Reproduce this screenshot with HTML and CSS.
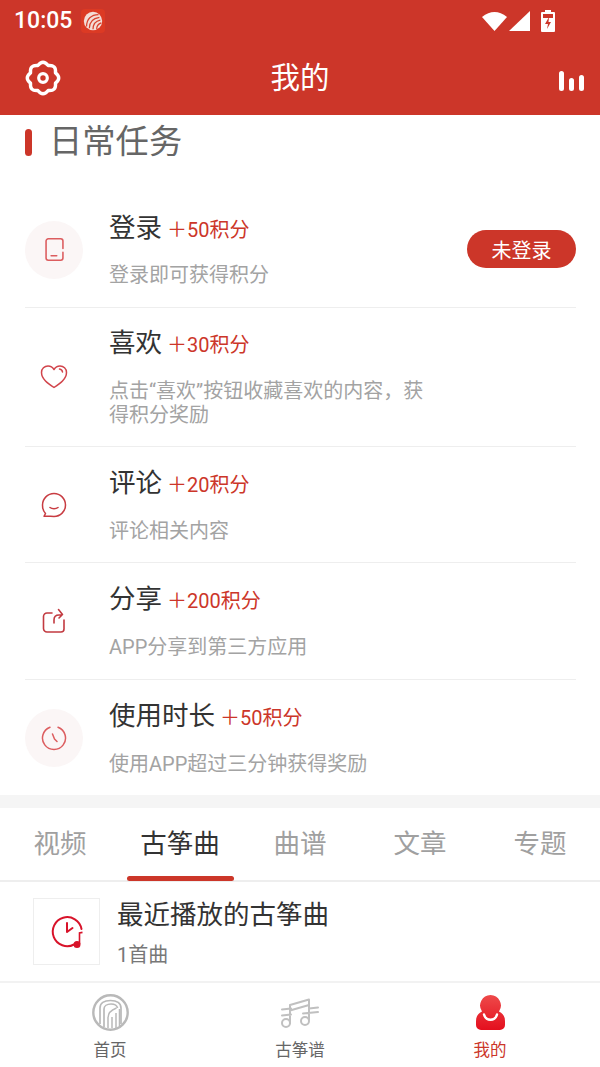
FILE: index.html
```html
<!DOCTYPE html>
<html lang="zh">
<head>
<meta charset="utf-8">
<title>我的</title>
<link rel="stylesheet" href="styles.css">
</head>
<body>
<div class="app">
  <header class="top">
    <div class="status">
      <span class="time">10:05</span>
      <span class="notif"><svg viewBox="0 0 24 24" width="22" height="22"><circle cx="12" cy="12" r="10" fill="#f3dcd6"/><path d="M5 18C5 10 10 5 18 5M8 20c0-7 4-11 11-12M12 21c0-5 3-9 8-10M16 21c0-3 2-6 5-7" fill="none" stroke="#d8402c" stroke-width="1.300"/></svg></span>
      <span class="status-right">
        <svg class="wifi" viewBox="0 0 25 20" width="25" height="20"><path d="M0 6Q12.500-4 25 6L12.500 20Z" fill="#fff"/></svg>
        <svg class="signal" viewBox="0 0 21 20" width="21" height="20"><path d="M21 0V20H0Z" fill="#fff"/></svg>
        <svg class="batt" viewBox="0 0 14 22" width="14" height="22"><path d="M4 0h6v2h3a1 1 0 0 1 1 1v18a1 1 0 0 1-1 1H1a1 1 0 0 1-1-1V3a1 1 0 0 1 1-1h3Z" fill="#fff"/><path d="M2 4h10v4H2Z" fill="#cc3629"/><path d="M8 7 4 14h3l-1 5 4-7H7.500Z" fill="#cc3629"/></svg>
      </span>
    </div>
    <div class="nav">
      <svg class="gear" viewBox="0 0 36 36" width="36" height="36"><path d="M12.830 5.530Q18-1 23.170 5.530Q31.400 4.600 30.470 12.830Q37 18 30.470 23.170Q31.400 31.400 23.170 30.470Q18 37 12.830 30.470Q4.600 31.400 5.530 23.170Q-1 18 5.530 12.830Q4.600 4.600 12.830 5.530Z" fill="none" stroke="#fff" stroke-width="3.400" stroke-linejoin="round"/><circle cx="18" cy="18" r="4.300" fill="none" stroke="#fff" stroke-width="3.200"/></svg>
      <h1 class="nav-title">我的</h1>
      <svg class="bars" viewBox="0 0 25 20" width="25" height="20"><path d="M2.500 2.500v15M12.500 9.500v8M22.500 6.500v11" stroke="#fff" stroke-width="5" stroke-linecap="round"/></svg>
    </div>
  </header>

  <section class="tasks">
    <div class="sec-head"><span class="mark"></span><h2 class="sec-title">日常任务</h2></div>

    <div class="task first">
      <div class="ico disc"><svg viewBox="0 0 24 24" width="27" height="27"><path d="M19.500 11V4.500a2 2 0 0 0-2-2h-11a2 2 0 0 0-2 2v15a2 2 0 0 0 2 2h11a2 2 0 0 0 2-2V14.500M9 17.500h5" fill="none" stroke="#dc5d5f" stroke-width="1.400" stroke-linecap="round"/></svg></div>
      <div class="body">
        <div class="line"><span class="name">登录</span><span class="pts">＋50积分</span></div>
        <p class="desc">登录即可获得积分</p>
      </div>
      <button class="btn">未登录</button>
    </div>

    <div class="task two">
      <div class="ico"><svg viewBox="0 0 28 26" width="28" height="26"><path d="M14 23.500C8 19.500 1.500 15 1.500 8.500 1.500 4.500 4.500 2 8 2c2.500 0 4.700 1.300 6 3.500C15.300 3.300 17.500 2 20 2c3.500 0 6.500 2.500 6.500 6.500 0 6.500-6.500 11-12.500 15ZM19.500 5c1.500.2 2.800 1.200 3 3" fill="none" stroke="#d1444b" stroke-width="1.500" stroke-linecap="round" stroke-linejoin="round"/></svg></div>
      <div class="body">
        <div class="line"><span class="name">喜欢</span><span class="pts">＋30积分</span></div>
        <p class="desc wrap">点击“喜欢”按钮收藏喜欢的内容，获得积分奖励</p>
      </div>
    </div>

    <div class="task">
      <div class="ico"><svg viewBox="0 0 26 26" width="26" height="26"><path d="M4.500 21.500C2.500 19.500 1.500 16.500 1.500 13a11.500 11.500 0 1 1 11.500 11.500c-3 0-6-.5-10-.2ZM9 15.500c2 1.700 6 1.700 8 0" fill="none" stroke="#c83c42" stroke-width="1.500" stroke-linecap="round" stroke-linejoin="round"/></svg></div>
      <div class="body">
        <div class="line"><span class="name">评论</span><span class="pts">＋20积分</span></div>
        <p class="desc">评论相关内容</p>
      </div>
    </div>

    <div class="task mid">
      <div class="ico"><svg viewBox="0 0 24 26" width="24" height="26"><path d="M10 5H5a3.500 3.500 0 0 0-3.500 3.500v12A3.500 3.500 0 0 0 5 24h14a3 3 0 0 0 3-3V12M12 15v-3c0-3 2-5 5-5h3M16.500 1.500 20.500 6.500 17 10" fill="none" stroke="#c23a40" stroke-width="1.600" stroke-linecap="round" stroke-linejoin="round"/></svg></div>
      <div class="body">
        <div class="line"><span class="name">分享</span><span class="pts">＋200积分</span></div>
        <p class="desc">APP分享到第三方应用</p>
      </div>
    </div>

    <div class="task">
      <div class="ico disc"><svg viewBox="0 0 26 26" width="26" height="26"><path d="M9 2.200A11.500 11.500 0 1 0 17 2.200M11.500 9l2 5 2.500 2.500" fill="none" stroke="#dc5d5f" stroke-width="1.500" stroke-linecap="round" stroke-linejoin="round"/></svg></div>
      <div class="body">
        <div class="line"><span class="name">使用时长</span><span class="pts">＋50积分</span></div>
        <p class="desc">使用APP超过三分钟获得奖励</p>
      </div>
    </div>
  </section>

  <nav class="tabs">
    <span class="tab">视频</span>
    <span class="tab active">古筝曲</span>
    <span class="tab">曲谱</span>
    <span class="tab">文章</span>
    <span class="tab">专题</span>
  </nav>

  <div class="recent">
    <div class="thumb"><svg viewBox="0 0 34 36" width="34" height="36"><path d="M24 30.500A14.500 14.500 0 1 1 31.500 15M17 9V18L22.500 14" fill="none" stroke="#d8132a" stroke-width="2" stroke-linecap="round" stroke-linejoin="round"/><path d="M29.500 30V19l3-.6" fill="none" stroke="#d8132a" stroke-width="1.600"/><circle cx="27" cy="30.500" r="3.500" fill="#d8132a"/></svg></div>
    <div class="recent-text">
      <div class="recent-title">最近播放的古筝曲</div>
      <div class="recent-sub">1首曲</div>
    </div>
  </div>

  <footer class="bottom">
    <div class="bitem">
      <div class="bicon"><svg viewBox="0 0 37 37" width="37" height="37"><circle cx="18.500" cy="18.500" r="17.200" fill="none" stroke="#b9b9b9" stroke-width="2.400"/><path d="M8 30V14C8 9 12 6.500 18.500 6.500S29 9 29 14v16M12 33V15c0-3 3-5 7-5 4 0 6 1.500 6.500 4" fill="none" stroke="#b9b9b9" stroke-width="1.700"/><path d="M16 34V24c0-4 3-8 8.500-10M20 34V23M24 34V19M27.500 32V15" fill="none" stroke="#b9b9b9" stroke-width="1.500"/></svg></div>
      <span class="blabel">首页</span>
    </div>
    <div class="bitem">
      <div class="bicon"><svg viewBox="0 0 38 30" width="38" height="30"><g fill="none" stroke="#c0c0c0" stroke-width="2" stroke-linecap="round"><path d="M9 7V25M28 2V22M9 7 28 1.500M9 12.500 28 7M1 11.500 10 10.500M1 17.500 10 16.500M28 10.500 37 9.500M22 15.500 37 14"/><circle cx="5" cy="25" r="4"/><circle cx="24" cy="23" r="4"/></g></svg></div>
      <span class="blabel">古筝谱</span>
    </div>
    <div class="bitem on">
      <div class="bicon"><svg viewBox="0 0 29 35" width="29" height="35"><defs><linearGradient id="me" x1="0" y1="0" x2="0" y2="1"><stop offset="0" stop-color="#ee4a4a"/><stop offset="1" stop-color="#e40f1e"/></linearGradient></defs><path d="M14.500 0a10.500 10.500 0 0 1 8.500 16.500c4 2 6 5 6 9.500v4a5 5 0 0 1-5 5H5a5 5 0 0 1-5-5v-4c0-4.500 2-7.500 6-9.500A10.500 10.500 0 0 1 14.500 0Z" fill="url(#me)"/><path d="M8 19.500c2 7 11 7 13 0" fill="none" stroke="#fff" stroke-width="2.400" stroke-linecap="round"/></svg></div>
      <span class="blabel">我的</span>
    </div>
  </footer>
</div>
</body>
</html>
```
FILE: styles.css
```css
* { box-sizing: border-box; }
html, body { margin: 0; padding: 0; }
body { background: #fff; font-family: Roboto, "Noto Sans CJK SC", sans-serif; }
.app { width: 600px; height: 1067px; overflow: hidden; display: flex; flex-direction: column; }

.top { background: #cc3629; height: 115px; color: #fff; flex: none; }
.status { height: 41px; display: flex; align-items: center; padding: 0 14px; }
.time { font-size: 23px; font-weight: 500; }
.notif { margin-left: 9px; width: 24px; height: 24px; background: #dc3a24; border-radius: 4px; display: flex; align-items: center; justify-content: center; }
.status-right { margin-left: auto; display: flex; align-items: center; padding-right: 31px; }
.signal { margin-left: 2px; }
.batt { margin-left: 11px; }
.nav { height: 74px; display: flex; align-items: center; justify-content: space-between; padding: 0 16px 0 25px; position: relative; }
.gear { margin-top: -1px; }
.nav-title { font-size: 29.500px; font-weight: 400; margin: 0; line-height: 1; position: absolute; left: 0; right: 0; text-align: center; top: 23px; }
.bars { margin-top: 6px; }

.tasks { padding: 0 24px 0 25px; flex: none; height: 693px; border-bottom: 13px solid #f5f5f5; }
.sec-head { height: 54px; margin-bottom: 23px; display: flex; align-items: center; }
.mark { width: 7px; height: 27px; background: #cc3629; border-radius: 4px; margin-right: 17px; }
.sec-title { font-size: 33.300px; font-weight: 400; color: #666; margin: 0; line-height: 1; }

.task { display: flex; align-items: center; height: 116px; border-top: 1px solid #eeeeee; position: relative; }
.task .ico { flex: none; width: 58px; height: 58px; display: flex; align-items: center; justify-content: center; }
.task .disc { background: #fbf6f6; border-radius: 50%; }
.first { border-top: 0; height: 115px; }
.two { height: 139px; }
.mid { height: 117px; }
.body { margin-left: 26px; flex: 1; min-width: 0; align-self: flex-start; padding-top: 16px; }
.two .body { padding-top: 15px; }
.line { display: flex; align-items: baseline; height: 40px; }
.name { font-size: 26.500px; color: #333; line-height: 40px; }
.pts { font-size: 20px; color: #cc3629; margin-left: 5px; line-height: 40px; }
.desc { font-size: 20px; color: #a3a3a3; margin: 16px 0 0; line-height: 24px; }
.first .desc { margin-top: 15px; }
.desc.wrap { width: 320px; }
.btn { position: absolute; right: 0; top: 38px; width: 109px; height: 38px; border: 0; border-radius: 19px; background: #cc3629; color: #fff; font: 400 20px Roboto, "Noto Sans CJK SC", sans-serif; padding: 0; }

.tabs { flex: none; height: 74px; display: flex; border-bottom: 2px solid #eeeeee; }
.tab { flex: 1; text-align: center; font-size: 26.500px; color: #a0a0a0; line-height: 72px; position: relative; white-space: nowrap; }
.tab.active { color: #333; }
.tab.active::after { content: ""; position: absolute; left: 7px; right: 6px; bottom: -1px; height: 5px; border-radius: 3px; background: #cc3629; }

.recent { flex: none; height: 101px; display: flex; align-items: center; padding: 0 0 0 33px; border-bottom: 2px solid #f2f2f2; }
.thumb { width: 67px; height: 67px; border: 1px solid #eeeeee; display: flex; align-items: center; justify-content: center; }
.recent-text { margin-left: 17px; padding-top: 2px; }
.recent-title { font-size: 26.500px; color: #333; line-height: 36px; }
.recent-sub { font-size: 20px; color: #777; line-height: 28px; margin-top: 8px; }

.bottom { flex: 1; display: flex; padding: 0 15px; }
.bitem { flex: 1; display: flex; flex-direction: column; align-items: center; padding-top: 11px; }
.bicon { height: 37px; display: flex; align-items: center; justify-content: center; }
.blabel { font-size: 16.500px; color: #666; line-height: 24px; margin-top: 8px; }
.on .blabel { color: #cc3629; }
```
